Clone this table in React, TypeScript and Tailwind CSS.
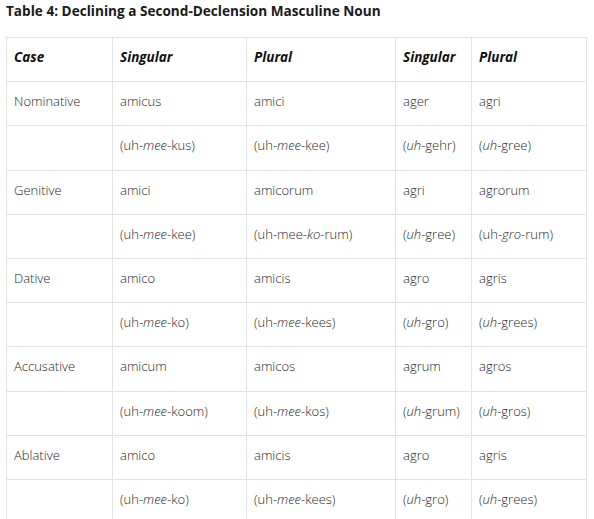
import React from "react";

type Cell = React.ReactNode;

const I = ({ children }: { children: React.ReactNode }) => <em className="italic">{children}</em>;

const rows: Cell[][] = [
  ["Nominative", "amicus", "amici", "ager", "agri"],
  ["", <>(uh-<I>mee</I>-kus)</>, <>(uh-<I>mee</I>-kee)</>, <>(<I>uh</I>-gehr)</>, <>(<I>uh</I>-gree)</>],
  ["Genitive", "amici", "amicorum", "agri", "agrorum"],
  ["", <>(uh-<I>mee</I>-kee)</>, <>(uh-mee-<I>ko</I>-rum)</>, <>(<I>uh</I>-gree)</>, <>(uh-<I>gro</I>-rum)</>],
  ["Dative", "amico", "amicis", "agro", "agris"],
  ["", <>(uh-<I>mee</I>-ko)</>, <>(uh-<I>mee</I>-kees)</>, <>(<I>uh</I>-gro)</>, <>(<I>uh</I>-grees)</>],
  ["Accusative", "amicum", "amicos", "agrum", "agros"],
  ["", <>(uh-<I>mee</I>-koom)</>, <>(uh-<I>mee</I>-kos)</>, <>(<I>uh</I>-grum)</>, <>(<I>uh</I>-gros)</>],
  ["Ablative", "amico", "amicis", "agro", "agris"],
  ["", <>(uh-<I>mee</I>-ko)</>, <>(uh-<I>mee</I>-kees)</>, <>(<I>uh</I>-gro)</>, <>(<I>uh</I>-grees)</>],
];

const headers = ["Case", "Singular", "Plural", "Singular", "Plural"];
const widths = ["w-[106px]", "w-[134px]", "w-[149px]", "w-[76px]", "w-[115px]"];

export default function App() {
  return (
    <div className="bg-white w-[594px] h-[519px] overflow-hidden text-[#1f1f1f]" style={{ fontFamily: '"Open Sans", sans-serif' }}>
      <div className="pl-[6px] pt-[1px] text-[13.6px] leading-[20px] font-bold text-[#1a1a1a]">
        Table 4: Declining a Second-Declension Masculine Noun
      </div>
      <table className="mt-[16px] ml-[6px] border-collapse w-[581px] table-fixed text-[13px]">
        <colgroup>
          {widths.map((w, i) => (
            <col key={i} className={w} />
          ))}
        </colgroup>
        <thead>
          <tr>
            {headers.map((h, i) => (
              <th key={i} className="border border-[#e2e2e2] px-[7px] pt-[8px] pb-[12px] leading-[23.2px] text-left text-[13.5px] font-bold italic text-[#111]">
                {h}
              </th>
            ))}
          </tr>
        </thead>
        <tbody>
          {rows.map((r, ri) => (
            <tr key={ri}>
              {r.map((c, ci) => (
                <td key={ci} className="border border-[#e2e2e2] px-[7px] pt-[8px] pb-[12px] leading-[23.2px] text-left align-middle whitespace-nowrap font-light">
                  {c}
                </td>
              ))}
            </tr>
          ))}
        </tbody>
      </table>
    </div>
  );
}
